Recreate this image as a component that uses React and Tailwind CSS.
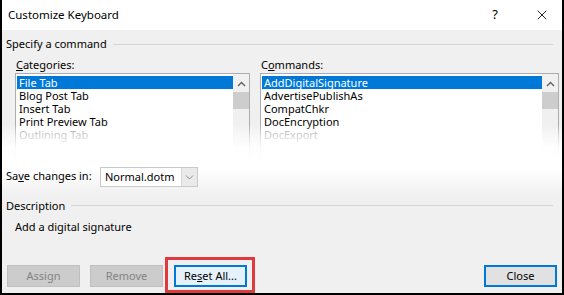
import { X } from 'lucide-react'

const font = { fontFamily: '"Noto Sans", "Open Sans", sans-serif' }

const ListBox = ({ items, width }) => (
  <div className={`${width} h-[88px] bg-white border border-[#abadb3] flex`}>
    <ul className="flex-1 pt-[2px] pl-[1px] text-[11px] leading-[13px] text-black">
      {items.map((item, i) => (
        <li
          key={item}
          className={
            i === 0
              ? 'bg-[#0078d7] text-white px-[2px] h-[13px]'
              : i === items.length - 1
              ? 'px-[2px] h-[13px] text-[#9a9a9a]'
              : 'px-[2px] h-[13px]'
          }
        >
          {item}
        </li>
      ))}
    </ul>
    <div className="w-[16px] bg-[#f0f0f0] flex flex-col items-center">
      <svg width="9" height="6" viewBox="0 0 9 6" className="mt-[7px]">
        <path d="M1 5 L4.5 1.5 L8 5" fill="none" stroke="#606060" strokeWidth="1.4" />
      </svg>
      <div className="w-[16px] h-[17px] bg-[#cdcdcd] mt-[5px]" />
    </div>
  </div>
)

const Button = ({ children, variant }) => {
  const cls = {
    disabled: 'border border-[#bfbfbf] bg-[#cccccc] text-[#838383]',
    focus: 'border-2 border-[#0078d7] bg-[#e5f1fb] text-black',
    default: 'border-2 border-[#0078d7] bg-[#e1e1e1] text-black',
  }[variant]
  return (
    <button className={`w-[73px] h-[22px] text-[11px] flex items-center justify-center ${cls}`}>
      {children}
    </button>
  )
}

const App = () => {
  return (
    <div
      className="relative w-[564px] h-[295px] bg-[#f0f0f0] border-x-2 border-b-2 border-black flex flex-col overflow-hidden"
      style={font}
    >
      <div className="h-[30px] bg-white flex items-center justify-between pl-[6px] pr-[12px]">
        <span className="text-[11.5px] text-black">Customize Keyboard</span>
        <div className="flex items-center gap-[36px]">
          <span className="text-[13px] text-black">?</span>
          <X className="w-[16px] h-[16px] text-black" strokeWidth={1.3} />
        </div>
      </div>

      <div className="flex items-center pl-[4px] pr-[9px] mt-[6px] gap-[6px]">
        <span className="text-[11px] text-black">Specify a command</span>
        <div className="flex-1 h-px bg-[#d5d5d5]" />
      </div>

      <div className="flex pl-[13px] gap-[10px] mt-[4px]">
        <div className="flex flex-col">
          <span className="text-[11px] text-black pl-[1px] leading-[16px]">
            <u>C</u>ategories:
          </span>
          <ListBox
            width="w-[235px]"
            items={['File Tab', 'Blog Post Tab', 'Insert Tab', 'Print Preview Tab', 'Outlining Tab']}
          />
        </div>
        <div className="flex flex-col">
          <span className="text-[11px] text-black pl-[1px] leading-[16px]">
            C<u>o</u>mmands:
          </span>
          <ListBox
            width="w-[299px]"
            items={['AddDigitalSignature', 'AdvertisePublishAs', 'CompatChkr', 'DocEncryption', 'DocExport']}
          />
        </div>
      </div>

      {/* faded tear between the lists and the lower half of the dialog */}
      <div className="absolute left-0 right-0 top-[124px] h-[38px] pointer-events-none bg-[linear-gradient(to_bottom,rgba(255,255,255,0)_0%,rgba(255,255,255,0.6)_35%,rgba(255,255,255,0.95)_65%,#fff_100%)]" />

      <div className="flex items-center pl-[4px] pt-[6px] pb-[8px] bg-[linear-gradient(to_bottom,#fff_0%,#fff_25%,#f0f0f0_100%)]">
        <span className="text-[11px] text-black w-[94px] whitespace-nowrap">
          Sa<u>v</u>e changes in:
        </span>
        <div className="w-[98px] h-[20px] bg-white border border-[#c9c9c9] flex">
          <span className="flex-1 text-[11px] text-black pl-[4px] leading-[18px]">Normal.dotm</span>
          <div className="w-[16px] bg-[#eaeaea] border-l border-[#d9d9d9] flex items-center justify-center">
            <svg width="9" height="6" viewBox="0 0 9 6">
              <path d="M1 1.5 L4.5 5 L8 1.5" fill="none" stroke="#8a8a8a" strokeWidth="1" />
            </svg>
          </div>
        </div>
      </div>

      <div className="flex items-center pl-[4px] pr-[9px] mt-[3px] gap-[6px]">
        <span className="text-[11px] text-black">Description</span>
        <div className="flex-1 h-px bg-[#d5d5d5]" />
      </div>
      <div className="pl-[13px] mt-[5px] text-[11px] text-black">Add a digital signature</div>

      <div className="flex items-end pl-[5px] pr-[5px] mt-auto">
        <div className="mb-[6px]">
          <Button variant="disabled">Assign</Button>
        </div>
        <div className="ml-[10px] mb-[6px]">
          <Button variant="disabled">Remove</Button>
        </div>
        <div className="ml-[2px] border-[3px] border-[#e0393e] pl-[6px] pr-[5px] pt-[5px] pb-[3px]">
          <Button variant="focus">
            Re<u>s</u>et All...
          </Button>
        </div>
        <div className="ml-auto mb-[6px]">
          <Button variant="default">Close</Button>
        </div>
      </div>
    </div>
  )
}

export default App
